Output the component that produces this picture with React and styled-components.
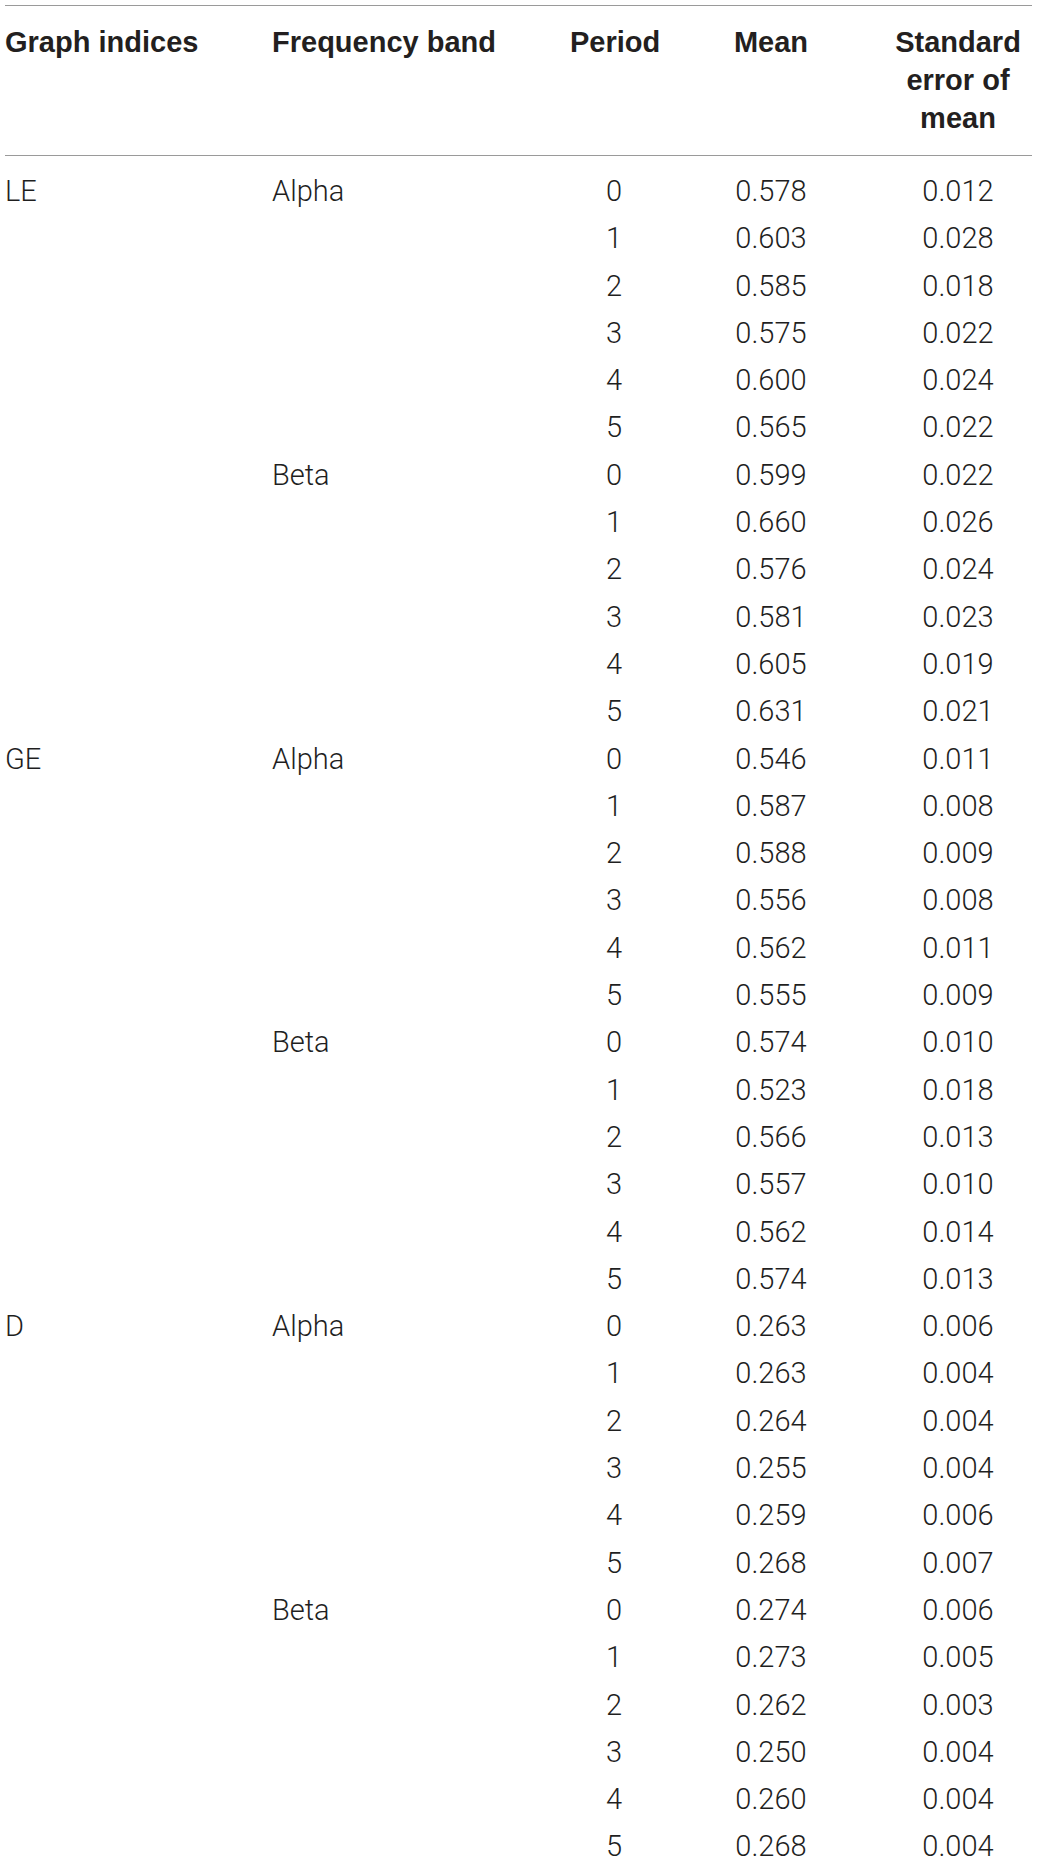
import React from 'react'
import styled, { createGlobalStyle } from 'styled-components'

const GlobalStyle = createGlobalStyle`
  html, body {
    margin: 0;
    padding: 0;
    background: #ffffff;
  }
`

const Page = styled.div`
  padding: 5px 0 0 5px;
  font-family: "Liberation Sans", Arial, sans-serif;
`

const Table = styled.table`
  width: 1027px;
  border-collapse: collapse;
  table-layout: fixed;
  font-size: 29px;
`

const Head = styled.thead`
  border-top: 1px solid #9a9a9a;
  border-bottom: 1px solid #9a9a9a;
`

const Th = styled.th`
  padding: 17px 0 18px;
  vertical-align: top;
  text-align: ${p => (p.$center ? 'center' : 'left')};
  font-weight: 700;
  line-height: 38px;
  color: #231f20;
`

const Row = styled.tr`
  &:first-child td {
    padding-top: 12px;
  }
`

const Td = styled.td`
  padding: 0;
  text-align: ${p => (p.$center ? 'center' : 'left')};
  font-family: Roboto, "Liberation Sans", Arial, sans-serif;
  line-height: 47.3px;
  font-weight: 300;
  color: #1f1f1f;
`

const data = {
  LE: {
    Alpha: [['0.578', '0.012'], ['0.603', '0.028'], ['0.585', '0.018'], ['0.575', '0.022'], ['0.600', '0.024'], ['0.565', '0.022']],
    Beta: [['0.599', '0.022'], ['0.660', '0.026'], ['0.576', '0.024'], ['0.581', '0.023'], ['0.605', '0.019'], ['0.631', '0.021']],
  },
  GE: {
    Alpha: [['0.546', '0.011'], ['0.587', '0.008'], ['0.588', '0.009'], ['0.556', '0.008'], ['0.562', '0.011'], ['0.555', '0.009']],
    Beta: [['0.574', '0.010'], ['0.523', '0.018'], ['0.566', '0.013'], ['0.557', '0.010'], ['0.562', '0.014'], ['0.574', '0.013']],
  },
  D: {
    Alpha: [['0.263', '0.006'], ['0.263', '0.004'], ['0.264', '0.004'], ['0.255', '0.004'], ['0.259', '0.006'], ['0.268', '0.007']],
    Beta: [['0.274', '0.006'], ['0.273', '0.005'], ['0.262', '0.003'], ['0.250', '0.004'], ['0.260', '0.004'], ['0.268', '0.004']],
  },
}

const rows = []
Object.entries(data).forEach(([index, bands]) => {
  Object.entries(bands).forEach(([band, values], b) => {
    values.forEach(([mean, sem], period) => {
      rows.push({
        index: b === 0 && period === 0 ? index : '',
        band: period === 0 ? band : '',
        period,
        mean,
        sem,
      })
    })
  })
})

export default function App() {
  return (
    <Page>
      <GlobalStyle />
      <Table>
        <colgroup>
          <col style={{ width: 267 }} />
          <col style={{ width: 298 }} />
          <col style={{ width: 88 }} />
          <col style={{ width: 226 }} />
          <col style={{ width: 148 }} />
        </colgroup>
        <Head>
          <tr>
            <Th>Graph indices</Th>
            <Th>Frequency band</Th>
            <Th $center>Period</Th>
            <Th $center>Mean</Th>
            <Th $center>
              Standard
              <br />
              error of
              <br />
              mean
            </Th>
          </tr>
        </Head>
        <tbody>
          {rows.map((r, i) => (
            <Row key={i}>
              <Td>{r.index}</Td>
              <Td>{r.band}</Td>
              <Td $center>{r.period}</Td>
              <Td $center>{r.mean}</Td>
              <Td $center>{r.sem}</Td>
            </Row>
          ))}
        </tbody>
      </Table>
    </Page>
  )
}
